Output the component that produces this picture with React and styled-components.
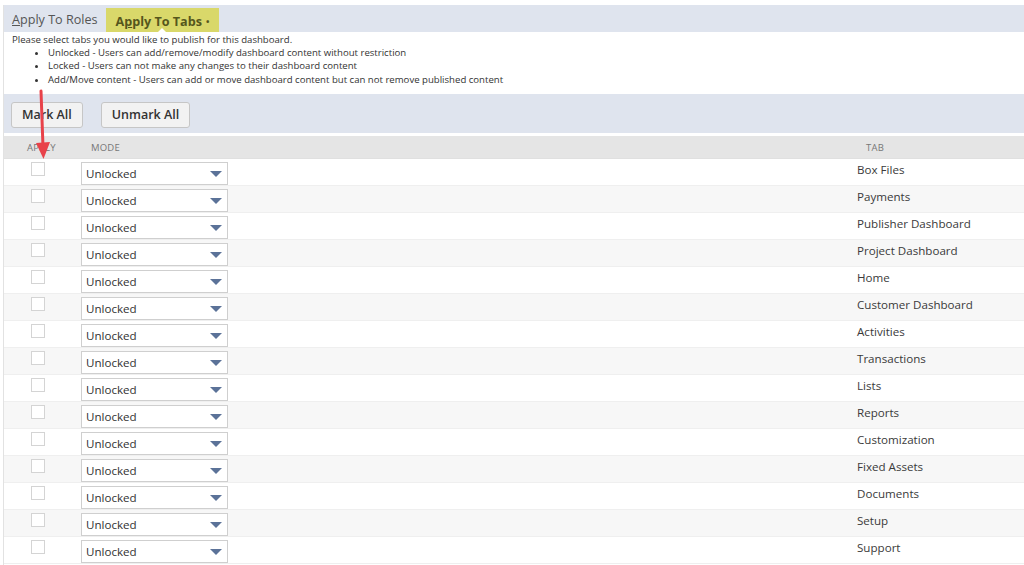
import React from 'react'
import styled, { createGlobalStyle } from 'styled-components'

const Global = createGlobalStyle`
  body {
    margin: 0;
    background: #fff;
    font-family: "Open Sans", "Liberation Sans", sans-serif;
    color: #333;
  }
`

const Page = styled.div`
  position: relative;
  margin: 5px 0 0 3px;
  border-left: 1px solid #e2e2e2;
  height: 560px;
  overflow: hidden;
`

const TabBar = styled.div`
  display: flex;
  align-items: stretch;
  height: 27px;
  background: #dfe4ee;
`

const Tab = styled.div`
  position: relative;
  display: flex;
  align-items: center;
  padding: 2px ${p => (p.active ? '10px' : '8px')} 0;
  font-size: 12.6px;
  font-weight: ${p => (p.active ? 700 : 400)};
  color: ${p => (p.active ? '#55561c' : '#555')};
  background: ${p => (p.active ? '#d9d86a' : 'transparent')};
  margin-top: ${p => (p.active ? '3px' : '0')};
  &::after {
    content: ${p => (p.active ? "''" : 'none')};
    position: absolute;
    left: 50%;
    bottom: 0;
    margin-left: -4px;
    border: 4px solid transparent;
    border-bottom-color: #fff;
    border-top: 0;
  }
`

const Dot = styled.span`
  font-size: 9px;
  margin-left: 4px;
`

const Notes = styled.div`
  height: 61px;
  padding: 1px 0 0 8px;
  font-size: 9.6px;
  line-height: 13.2px;
  color: #333;
  p {
    margin: 0;
  }
  ul {
    margin: 0;
    padding-left: 36px;
    list-style: disc;
  }
`

const Toolbar = styled.div`
  display: flex;
  align-items: center;
  gap: 18px;
  height: 39px;
  background: #dfe4ee;
  padding-left: 7px;
  margin-bottom: 3px;
`

const Button = styled.button`
  height: 26px;
  margin-top: 2px;
  padding: 0 10px;
  font-family: inherit;
  font-size: 12.5px;
  font-weight: 600;
  color: #333;
  background: #f2f2f2;
  border: 1px solid #c6c6c6;
  border-radius: 3px;
`

const Grid = styled.div`
  display: grid;
  grid-template-columns: 76px 1fr 168px;
`

const HeadCell = styled.div`
  height: 22px;
  background: #e5e5e5;
  display: flex;
  align-items: center;
  padding-left: ${p => p.pad || '0px'};
  font-size: 9.5px;
  color: #777;
  letter-spacing: 0.2px;
  border-bottom: 1px solid #e0e0e0;
`

const Cell = styled.div`
  height: 26px;
  background: ${p => (p.odd ? '#f7f7f7' : '#fff')};
  border-bottom: 1px solid #efefef;
  display: flex;
  align-items: flex-start;
  padding-left: ${p => p.pad || '0px'};
  font-size: 11.6px;
  color: #3a3a3a;
`

const Check = styled.span`
  width: 14px;
  height: 14px;
  margin-top: 3px;
  background: #fff;
  border: 1px solid #d4d4d4;
  box-sizing: border-box;
`

const Select = styled.div`
  width: 147px;
  height: 23px;
  margin-top: 3px;
  box-sizing: border-box;
  border: 1px solid #cfcfcf;
  background: #fff;
  display: flex;
  align-items: center;
  justify-content: space-between;
  padding: 0 5px 0 4px;
  font-size: 11.6px;
  color: #333;
`

const Caret = styled.span`
  width: 0;
  height: 0;
  border-left: 6px solid transparent;
  border-right: 6px solid transparent;
  border-top: 6px solid #5b7298;
`

const TabName = styled.span`
  margin-top: 3px;
`

const Arrow = styled.svg`
  position: absolute;
  left: 28px;
  top: 80px;
  pointer-events: none;
`

const tabs = [
  'Box Files',
  'Payments',
  'Publisher Dashboard',
  'Project Dashboard',
  'Home',
  'Customer Dashboard',
  'Activities',
  'Transactions',
  'Lists',
  'Reports',
  'Customization',
  'Fixed Assets',
  'Documents',
  'Setup',
  'Support',
]

export default function App() {
  return (
    <>
      <Global />
      <Page>
        <TabBar>
          <Tab>
            <span>
              <u>A</u>pply To Roles
            </span>
          </Tab>
          <Tab active>
            <span>
              A<u>p</u>ply To Tabs
            </span>
            <Dot>•</Dot>
          </Tab>
        </TabBar>
        <Notes>
          <p>Please select tabs you would like to publish for this dashboard.</p>
          <ul>
            <li>Unlocked - Users can add/remove/modify dashboard content without restriction</li>
            <li>Locked - Users can not make any changes to their dashboard content</li>
            <li>Add/Move content - Users can add or move dashboard content but can not remove published content</li>
          </ul>
        </Notes>
        <Toolbar>
          <Button>Mark All</Button>
          <Button>Unmark All</Button>
        </Toolbar>
        <Grid>
          <HeadCell pad="23px">APPLY</HeadCell>
          <HeadCell pad="11px">MODE</HeadCell>
          <HeadCell pad="10px">TAB</HeadCell>
          {tabs.map((t, i) => (
            <React.Fragment key={t}>
              <Cell odd={i % 2 === 1} pad="27px">
                <Check />
              </Cell>
              <Cell odd={i % 2 === 1} pad="1px">
                <Select>
                  <span>Unlocked</span>
                  <Caret />
                </Select>
              </Cell>
              <Cell odd={i % 2 === 1} pad="1px">
                <TabName>{t}</TabName>
              </Cell>
            </React.Fragment>
          ))}
        </Grid>
        <Arrow width="24" height="80" viewBox="0 0 24 80">
          <line x1="9" y1="6" x2="11" y2="62" stroke="#e8424a" strokeWidth="3" strokeLinecap="round" />
          <polygon points="4,58 18,57 11.5,74" fill="#e8424a" />
        </Arrow>
      </Page>
    </>
  )
}
